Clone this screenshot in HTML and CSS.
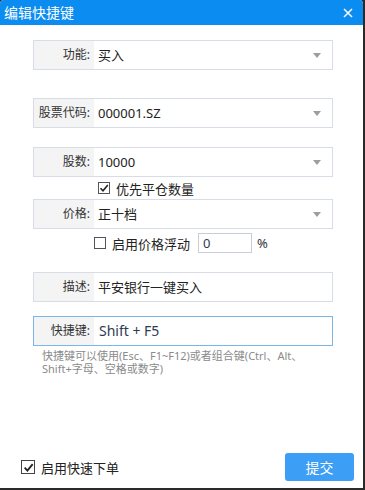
FILE: index.html
```html
<!DOCTYPE html>
<html lang="zh-CN">
<head>
  <meta charset="UTF-8">
  <title>编辑快捷键</title>
  <link rel="stylesheet" href="styles.css">
</head>
<body>

<div class="dialog">
  <div class="titlebar">
    <span class="title">编辑快捷键</span>
    <svg class="close" width="10" height="10" viewBox="0 0 10 10">
      <path d="M1 1L9 9M9 1L1 9" stroke="#fff" stroke-width="1.5" fill="none"/>
    </svg>
  </div>

  <div class="form">
    <!-- 功能 -->
    <div class="field row-func">
      <div class="label">功能:</div>
      <div class="value">买入</div>
      <span class="arrow"></span>
    </div>

    <!-- 股票代码 -->
    <div class="field row-code">
      <div class="label">股票代码:</div>
      <div class="value">000001.SZ</div>
      <span class="arrow"></span>
    </div>

    <!-- 股数 -->
    <div class="field row-qty">
      <div class="label">股数:</div>
      <div class="value">10000</div>
      <span class="arrow"></span>
    </div>
    <div class="check-line line-close">
      <span class="box checked"><svg width="10" height="10" viewBox="0 0 10 10"><path d="M1.5 5.2L4 7.8L8.8 2" stroke="#222" stroke-width="1.6" fill="none"/></svg></span>
      <span>优先平仓数量</span>
    </div>

    <!-- 价格 -->
    <div class="field">
      <div class="label">价格:</div>
      <div class="value">正十档</div>
      <span class="arrow"></span>
    </div>
    <div class="check-line line-float">
      <span class="box"></span>
      <span>启用价格浮动</span>
      <span class="float-input">0</span>
      <span class="pct">%</span>
    </div>

    <!-- 描述 -->
    <div class="field">
      <div class="label">描述:</div>
      <div class="value">平安银行一键买入</div>
    </div>

    <!-- 快捷键 -->
    <div class="field row-key focused">
      <div class="label">快捷键:</div>
      <div class="value key">Shift + F5</div>
    </div>
    <div class="hint">快捷键可以使用(Esc、F1~F12)或者组合键(Ctrl、Alt、Shift+字母、空格或数字)</div>
  </div>

  <div class="footer">
    <div class="check-line">
      <span class="box big checked"><svg width="11" height="11" viewBox="0 0 10 10"><path d="M1.5 5.2L4 7.8L8.8 2" stroke="#222" stroke-width="1.7" fill="none"/></svg></span>
      <span class="footer-text">启用快速下单</span>
    </div>
    <button class="submit">提交</button>
  </div>
</div>

</body>
</html>
```

FILE: styles.css
```css
body {
  margin: 0;
  padding: 0;
  background-color: #2a2a2a;
  font-family: "Noto Sans", "Noto Sans CJK SC", sans-serif;
  color: #333;
}
.dialog {
  width: 363px;
  height: 488px;
  background-color: #ffffff;
  border-radius: 4px 4px 0 0;
  overflow: hidden;
  position: relative;
}
.titlebar {
  height: 25px;
  background-color: #0a8cf0;
  display: flex;
  align-items: center;
  justify-content: space-between;
  padding: 0 10px 0 4px;
}
.title {
  color: #fff;
  font-size: 14px;
  line-height: 25px;
}
.close {
  display: block;
  margin-top: 1px;
}
.form {
  padding: 15px 30px 0 33px;
}
.field {
  width: 298px;
  height: 28px;
  border: 1px solid #d7dde6;
  display: flex;
  align-items: center;
  position: relative;
  font-size: 13px;
}
.field.focused {
  border-color: #7db6e6;
}
.label {
  width: 56px;
  height: 100%;
  background-color: #f4f4f4;
  text-align: right;
  padding-right: 4px;
  font-size: 12px;
  line-height: 28px;
  color: #333;
  white-space: nowrap;
}
.value {
  padding-left: 4px;
  color: #222;
  line-height: 28px;
}
.value.key {
  font-size: 14px;
  color: #2f3b52;
  padding-left: 5px;
}
.arrow {
  position: absolute;
  right: 11px;
  top: 12px;
  width: 0;
  height: 0;
  border-left: 4px solid transparent;
  border-right: 4px solid transparent;
  border-top: 5px solid #9d9d9d;
}
.row-func {
  margin-bottom: 28px;
}
.row-code {
  margin-bottom: 19px;
}
.check-line {
  display: flex;
  align-items: center;
  font-size: 13px;
  color: #222;
}
.line-close {
  height: 22px;
  padding-left: 65px;
}
.line-float {
  height: 28px;
  margin-bottom: 15px;
  padding-left: 61px;
}
.box {
  width: 10px;
  height: 10px;
  border: 1px solid #555;
  background: #fff;
  margin-right: 6px;
  display: flex;
  align-items: center;
  justify-content: center;
}
.box.big {
  width: 12px;
  height: 12px;
  border-color: #444;
}
.float-input {
  width: 48px;
  height: 18px;
  border: 1px solid #c9ced6;
  margin-left: 8px;
  padding-left: 4px;
  line-height: 18px;
  color: #2f3b52;
}
.pct {
  margin-left: 5px;
  color: #333;
}
.line-float + .field {
  margin-bottom: 14px;
}
.hint {
  font-size: 11px;
  line-height: 13px;
  color: #8a8a8a;
  padding: 3px 20px 0 9px;
}
.footer {
  position: absolute;
  left: 0;
  right: 0;
  bottom: 7px;
  display: flex;
  align-items: center;
  justify-content: space-between;
  padding: 0 9px 0 21px;
}
.footer-text {
  font-size: 13px;
}
.submit {
  width: 69px;
  height: 28px;
  border: none;
  border-radius: 3px;
  background-color: #3c9ef5;
  color: #fff;
  font-family: "Noto Sans CJK SC", sans-serif;
  font-size: 14px;
  cursor: pointer;
}
```
